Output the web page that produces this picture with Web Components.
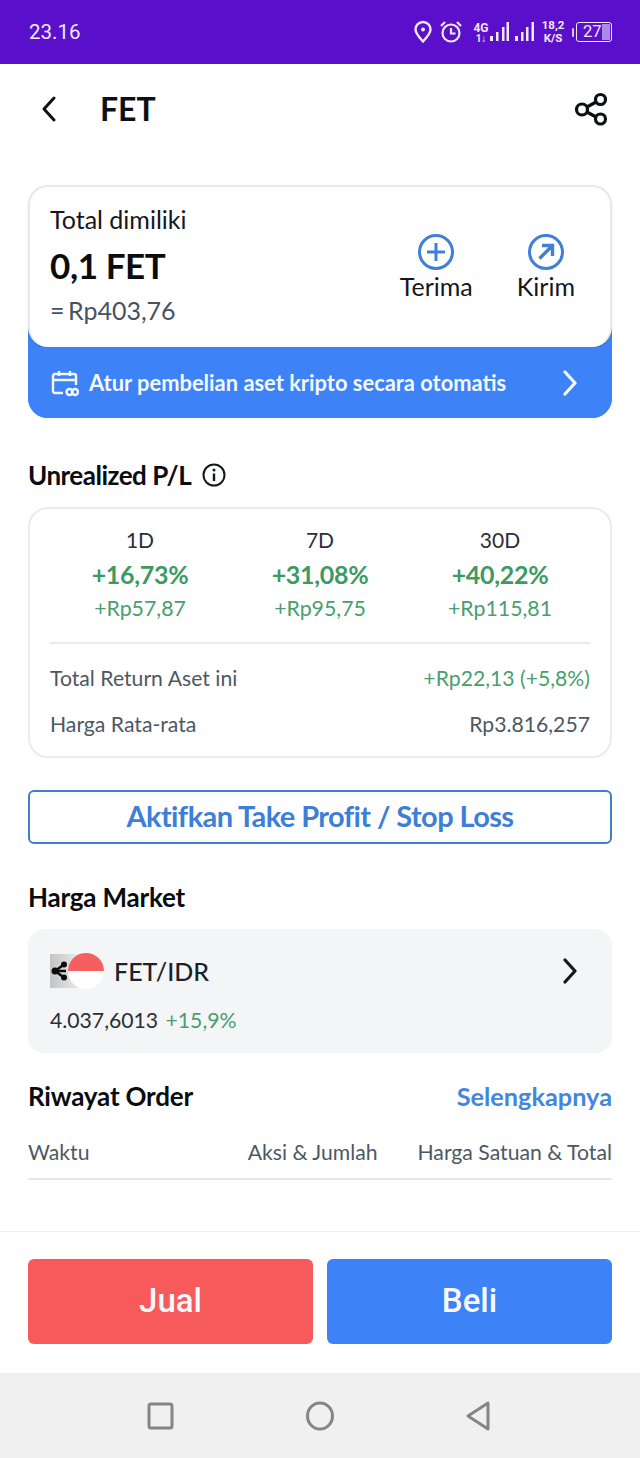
<!DOCTYPE html>
<html lang="id">
<head>
<meta charset="utf-8">
<title>FET</title>
<style>
  html, body { margin: 0; padding: 0; background: #fff; }
  body { font-family: Lato, "Liberation Sans", sans-serif; width: 640px; height: 1458px; overflow: hidden; display: flex; flex-direction: column; }
  main { flex: 1; padding: 0 28px; display: flex; flex-direction: column; }
</style>
</head>
<body>
<status-bar></status-bar>
<app-bar title="FET"></app-bar>
<main>
  <holding-card></holding-card>
  <pl-card></pl-card>
  <outline-button>Aktifkan Take Profit / Stop Loss</outline-button>
  <market-card></market-card>
  <order-history></order-history>
</main>
<action-bar></action-bar>
<nav-bar></nav-bar>

<script>
class StatusBar extends HTMLElement {
  constructor() {
    super();
    this.attachShadow({ mode: 'open' });
    this.shadowRoot.innerHTML = `
      <style>
        :host { display: flex; align-items: center; justify-content: space-between; height: 64px; background: #5a10cb; color: #f1e9fb; padding: 0 28px 0 29px; box-sizing: border-box; font-family: Roboto, sans-serif; }
        .time { font-size: 20.500px; }
        .icons { display: flex; align-items: center; }
        svg { display: block; }
        .stack { display: flex; flex-direction: column; align-items: center; font-weight: 700; line-height: 12px; font-size: 12px; }
        .net { font-size: 11.500px; line-height: 11px; font-weight: 700; display: flex; flex-direction: column; align-items: center; width: 22px; margin-left: 7px; }
        .bat { display: flex; align-items: center; margin-left: 8px; }
        .nub { width: 2px; height: 9px; background: #d9c8f3; margin-right: 2px; border-radius: 1px; }
        .cell { position: relative; width: 36px; height: 20px; box-sizing: border-box; border: 1.500px solid #f1e9fb; border-radius: 3px; font-size: 16.500px; line-height: 17px; padding-left: 6px; overflow: hidden; }
        .fill { position: absolute; right: 1px; top: 1px; bottom: 1px; width: 8px; background: #a98ae6; }
      </style>
      <span class="time">23.16</span>
      <div class="icons">
        <svg width="20" height="24" viewBox="0 0 20 24" fill="none" stroke="#f1e9fb" stroke-width="2.400"><path d="M10 21.500C6 17 2.500 13.500 2.500 9.500a7.500 7.500 0 0 1 15 0C17.500 13.500 14 17 10 21.500z"/><circle cx="10" cy="9.500" r="2" fill="#f1e9fb" stroke="none"/></svg>
        <svg style="margin-left:6px" width="24" height="24" viewBox="0 0 24 24" fill="none" stroke="#f1e9fb" stroke-width="2.200"><circle cx="12" cy="13" r="8.500"/><path d="M12 8V13.500H16.500M2 6L6 2M22 6L18 2"/></svg>
        <div class="stack" style="margin-left:10px;width:16px"><span>4G</span><span style="font-size:10px;line-height:9px">1↓</span></div>
        <svg width="20" height="22" viewBox="0 0 20 22" fill="#f1e9fb"><rect x="1" y="15" width="3" height="5"/><rect x="7" y="11" width="2.500" height="9"/><rect x="13" y="6" width="2.500" height="14"/><rect x="17.500" y="1" width="2.500" height="19"/></svg>
        <svg style="margin-left:6px" width="20" height="22" viewBox="0 0 20 22" fill="#f1e9fb"><rect x="0" y="15" width="3" height="5"/><rect x="6" y="11" width="2.500" height="9"/><rect x="11" y="6" width="2.500" height="14"/><rect x="16.500" y="1" width="2.500" height="19"/></svg>
        <div class="net"><span>18,2</span><span style="margin-top:2px">K/S</span></div>
        <div class="bat"><span class="nub"></span><div class="cell"><span class="fill"></span><span style="position:relative">27</span></div></div>
      </div>
    `;
  }
}

class AppBar extends HTMLElement {
  constructor() {
    super();
    this.attachShadow({ mode: 'open' });
    this.shadowRoot.innerHTML = `
      <style>
        :host { display: flex; align-items: center; height: 92px; padding: 0 32px 0 41px; box-sizing: border-box; padding-bottom: 2px; }
        h1 { margin: 0 0 0 43px; font-size: 32px; font-weight: 700; color: #0d0f14; flex: 1; line-height: 1; }
        svg { display: block; }
      </style>
      <svg width="16" height="26" viewBox="0 0 16 26" fill="none" stroke="#0d0f14" stroke-width="3" stroke-linecap="round" stroke-linejoin="round"><path d="M13 2L3 13L13 24"/></svg>
      <h1>${this.getAttribute('title')}</h1>
      <svg width="34" height="34" viewBox="0 0 34 34" fill="none" stroke="#0d0f14" stroke-width="3.200"><circle cx="8" cy="17.500" r="5.500"/><circle cx="26.500" cy="7.500" r="5"/><circle cx="26.500" cy="27" r="5"/><path d="M13 15L22 10M13 20L22 25"/></svg>
    `;
  }
}

class HoldingCard extends HTMLElement {
  constructor() {
    super();
    this.attachShadow({ mode: 'open' });
    this.shadowRoot.innerHTML = `
      <style>
        :host { display: block; margin-top: 29px; background: linear-gradient(#fff 50%, #3d82f6 50%); border-radius: 20px; height: 233px; }
        .top { box-sizing: border-box; height: 162px; background: #fff; border: 2px solid #e7e9ec; border-bottom: 0; border-radius: 20px; padding: 18px 35px 0 20px; display: flex; justify-content: space-between; box-shadow: 0 1px 2px rgba(0,0,0,.15); }
        .label { font-size: 25px; line-height: 28px; color: #14171c; }
        .value { font-size: 35px; line-height: 44px; font-weight: 700; color: #0a0c10; margin-top: 10px; letter-spacing: -.4px; }
        .fiat { font-size: 25px; line-height: 30px; color: #48535f; margin-top: 8px; word-spacing: -3px; }
        .actions { display: flex; gap: 44px; margin-top: 29px; }
        .act { display: flex; flex-direction: column; align-items: center; font-size: 25px; color: #14171c; line-height: 30px; gap: 1px; }
        .act svg { display: block; }
        .promo { display: flex; align-items: center; height: 71px; padding: 0 34px 0 23px; color: #f4f8ff; font-size: 21.900px; font-weight: 700; border-radius: 0 0 20px 20px; background: #3d82f6; }
        .promo span { flex: 1; margin-left: 10px; }
        svg { display: block; }
      </style>
      <div class="top">
        <div>
          <div class="label">Total dimiliki</div>
          <div class="value">0,1 FET</div>
          <div class="fiat">= Rp403,76</div>
        </div>
        <div class="actions">
          <div class="act">
            <svg width="36" height="36" viewBox="0 0 36 36" fill="none" stroke="#3f7fd8" stroke-width="3"><circle cx="18" cy="18" r="16.500"/><path d="M18 9V27M9 18H27"/></svg>
            Terima
          </div>
          <div class="act">
            <svg width="36" height="36" viewBox="0 0 36 36" fill="none" stroke="#3f7fd8" stroke-width="3"><circle cx="18" cy="18" r="16.500"/><path d="M11.500 24.500L24 12M14 11.500H24.500V22" stroke-width="3.400"/></svg>
            Kirim
          </div>
        </div>
      </div>
      <div class="promo">
        <svg width="28" height="28" viewBox="0 0 28 28" fill="none" stroke="#f4f8ff" stroke-width="2.400"><path d="M12 24H4a2 2 0 0 1-2-2V7a2 2 0 0 1 2-2h19a2 2 0 0 1 2 2v9M2 11H25M8 2V7M19 2V7"/><circle cx="18.500" cy="23" r="3"/><circle cx="24" cy="23" r="3"/></svg>
        <span>Atur pembelian aset kripto secara otomatis</span>
        <svg width="16" height="26" viewBox="0 0 16 26" fill="none" stroke="#f4f8ff" stroke-width="3.200" stroke-linecap="round" stroke-linejoin="round"><path d="M3 2L13 13L3 24"/></svg>
      </div>
    `;
  }
}

class PlCard extends HTMLElement {
  constructor() {
    super();
    this.attachShadow({ mode: 'open' });
    const periods = [
      ['1D', '+16,73%', '+Rp57,87'],
      ['7D', '+31,08%', '+Rp95,75'],
      ['30D', '+40,22%', '+Rp115,81']
    ];
    this.shadowRoot.innerHTML = `
      <style>
        :host { display: block; margin-top: 40px; }
        .head { display: flex; align-items: center; gap: 11px; height: 34px; font-size: 26px; font-weight: 700; color: #0a0c10; letter-spacing: -.5px; }
        svg { display: block; }
        .card { box-sizing: border-box; height: 251px; margin-top: 15px; border: 2px solid #e9ebee; border-radius: 20px; padding: 18px 20px 0; }
        .cols { display: grid; grid-template-columns: repeat(3, 1fr); text-align: center; padding-bottom: 21px; border-bottom: 2px solid #e9ebee; }
        .p { font-size: 21px; line-height: 26px; color: #2a2f36; }
        .pct { font-size: 25px; line-height: 32px; font-weight: 700; color: #3d9a62; margin-top: 5px; letter-spacing: -.3px; }
        .amt { font-size: 21.300px; line-height: 26px; color: #4a9e6d; margin-top: 5px; }
        .row { display: flex; justify-content: space-between; font-size: 21.200px; line-height: 26px; color: #4d5863; }
        .row.a { margin-top: 21px; }
        .row.b { margin-top: 20px; }
        .up { color: #4a9e6d; }
      </style>
      <div class="head">Unrealized P/L
        <svg width="24" height="24" viewBox="0 0 24 24" fill="none" stroke="#14171c" stroke-width="2"><circle cx="12" cy="12" r="10.500"/><path d="M12 10.500V18" stroke-width="2.400"/><circle cx="12" cy="7" r="1.500" fill="#14171c" stroke="none"/></svg>
      </div>
      <div class="card">
        <div class="cols">
          ${periods.map(p => `<div><div class="p">${p[0]}</div><div class="pct">${p[1]}</div><div class="amt">${p[2]}</div></div>`).join('')}
        </div>
        <div class="row a"><span>Total Return Aset ini</span><span class="up">+Rp22,13 (+5,8%)</span></div>
        <div class="row b"><span>Harga Rata-rata</span><span>Rp3.816,257</span></div>
      </div>
    `;
  }
}

class OutlineButton extends HTMLElement {
  constructor() {
    super();
    this.attachShadow({ mode: 'open' });
    this.shadowRoot.innerHTML = `
      <style>
        :host { display: flex; align-items: center; justify-content: center; box-sizing: border-box; height: 54px; margin-top: 32px; padding-bottom: 4px; border: 2px solid #3f7fc8; border-radius: 6px; color: #3d7fd6; font-size: 29px; font-weight: 700; letter-spacing: -.6px; }
      </style>
      <slot></slot>
    `;
  }
}

class MarketCard extends HTMLElement {
  constructor() {
    super();
    this.attachShadow({ mode: 'open' });
    this.shadowRoot.innerHTML = `
      <style>
        :host { display: block; margin-top: 36px; }
        .head { height: 34px; line-height: 34px; font-size: 26px; font-weight: 700; color: #0a0c10; letter-spacing: -.2px; }
        .card { box-sizing: border-box; height: 124px; margin-top: 15px; background: #f3f5f6; border-radius: 16px; padding: 22px 34px 0 22px; }
        .pair { display: flex; align-items: center; height: 40px; font-size: 25px; color: #1a222c; font-weight: 500; }
        .pair span { flex: 1; margin-left: 10px; }
        .logos { position: relative; width: 54px; height: 36px; }
        .coin { position: absolute; left: 0; top: 1px; width: 34px; height: 34px; background: linear-gradient(90deg, #c4c4c4, #f0f0f0); }
        .flag { position: absolute; left: 18px; top: 0; width: 36px; height: 36px; border-radius: 50%; overflow: hidden; background: linear-gradient(#f55f5f 50%, #fff 50%); }
        .coin svg { position: absolute; left: 0; top: 5px; }
        svg { display: block; }
        .quote { font-size: 21.200px; color: #2a2f36; margin-top: 15px; line-height: 28px; }
        .up { color: #4a9e6d; margin-left: 2px; }
      </style>
      <div class="head">Harga Market</div>
      <div class="card">
        <div class="pair">
          <div class="logos">
            <div class="coin"><svg width="20" height="24" viewBox="0 0 20 24" fill="#0c0c0c"><circle cx="5" cy="12" r="3.500"/><circle cx="14" cy="5.500" r="3"/><circle cx="14" cy="18.500" r="3"/><path d="M5 12L14 5.500M5 12L14 18.500M5 12H16" stroke="#0c0c0c" stroke-width="2.500"/></svg></div>
            <div class="flag"></div>
          </div>
          <span>FET/IDR</span>
          <svg width="16" height="26" viewBox="0 0 16 26" fill="none" stroke="#14171c" stroke-width="3.200" stroke-linecap="round" stroke-linejoin="round"><path d="M3 2L13 13L3 24"/></svg>
        </div>
        <div class="quote">4.037,6013 <span class="up">+15,9%</span></div>
      </div>
    `;
  }
}

class OrderHistory extends HTMLElement {
  constructor() {
    super();
    this.attachShadow({ mode: 'open' });
    this.shadowRoot.innerHTML = `
      <style>
        :host { display: block; margin-top: 26px; }
        .head { display: flex; justify-content: space-between; align-items: center; height: 34px; font-size: 26px; font-weight: 700; color: #0a0c10; letter-spacing: -.2px; }
        .more { color: #4287dc; letter-spacing: 0; font-size: 25.300px; }
        .cols { display: flex; align-items: center; height: 41px; border-bottom: 2px solid #e6e8eb; font-size: 21.200px; color: #4d5863; margin-top: 18px; padding-bottom: 6px; }
        .w { width: 220px; }
        .a { width: 170px; }
        .h { flex: 1; text-align: right; white-space: nowrap; }
      </style>
      <div class="head"><span>Riwayat Order</span><span class="more">Selengkapnya</span></div>
      <div class="cols"><span class="w">Waktu</span><span class="a">Aksi &amp; Jumlah</span><span class="h">Harga Satuan &amp; Total</span></div>
    `;
  }
}

class ActionBar extends HTMLElement {
  constructor() {
    super();
    this.attachShadow({ mode: 'open' });
    this.shadowRoot.innerHTML = `
      <style>
        :host { display: flex; gap: 14px; box-sizing: border-box; height: 142px; padding: 27px 28px 29px; border-top: 1.500px solid #eef0f1; background: #fff; }
        div { flex: 1; display: flex; align-items: center; justify-content: center; border-radius: 6px; color: #f8f9ff; font-family: Roboto, Lato, sans-serif; font-size: 33px; font-weight: 500; padding-bottom: 2px; }
        .sell { background: #f65a5a; }
        .buy { background: #3d82f6; }
      </style>
      <div class="sell">Jual</div>
      <div class="buy">Beli</div>
    `;
  }
}

class NavBar extends HTMLElement {
  constructor() {
    super();
    this.attachShadow({ mode: 'open' });
    this.shadowRoot.innerHTML = `
      <style>
        :host { display: flex; justify-content: center; align-items: center; gap: 130px; height: 85px; background: #f0f0f0; }
        svg { display: block; }
      </style>
      <svg width="28" height="30" viewBox="0 0 28 30" fill="none" stroke="#858585" stroke-width="3"><rect x="2" y="3" width="23" height="24" rx="2"/></svg>
      <svg width="30" height="30" viewBox="0 0 30 30" fill="none" stroke="#858585" stroke-width="3"><ellipse cx="15" cy="15" rx="12.500" ry="13"/></svg>
      <svg width="28" height="30" viewBox="0 0 28 30" fill="none" stroke="#858585" stroke-width="3" stroke-linejoin="round"><path d="M23 2V28L3 15z"/></svg>
    `;
  }
}

customElements.define('status-bar', StatusBar);
customElements.define('app-bar', AppBar);
customElements.define('holding-card', HoldingCard);
customElements.define('pl-card', PlCard);
customElements.define('outline-button', OutlineButton);
customElements.define('market-card', MarketCard);
customElements.define('order-history', OrderHistory);
customElements.define('action-bar', ActionBar);
customElements.define('nav-bar', NavBar);
</script>
</body>
</html>
